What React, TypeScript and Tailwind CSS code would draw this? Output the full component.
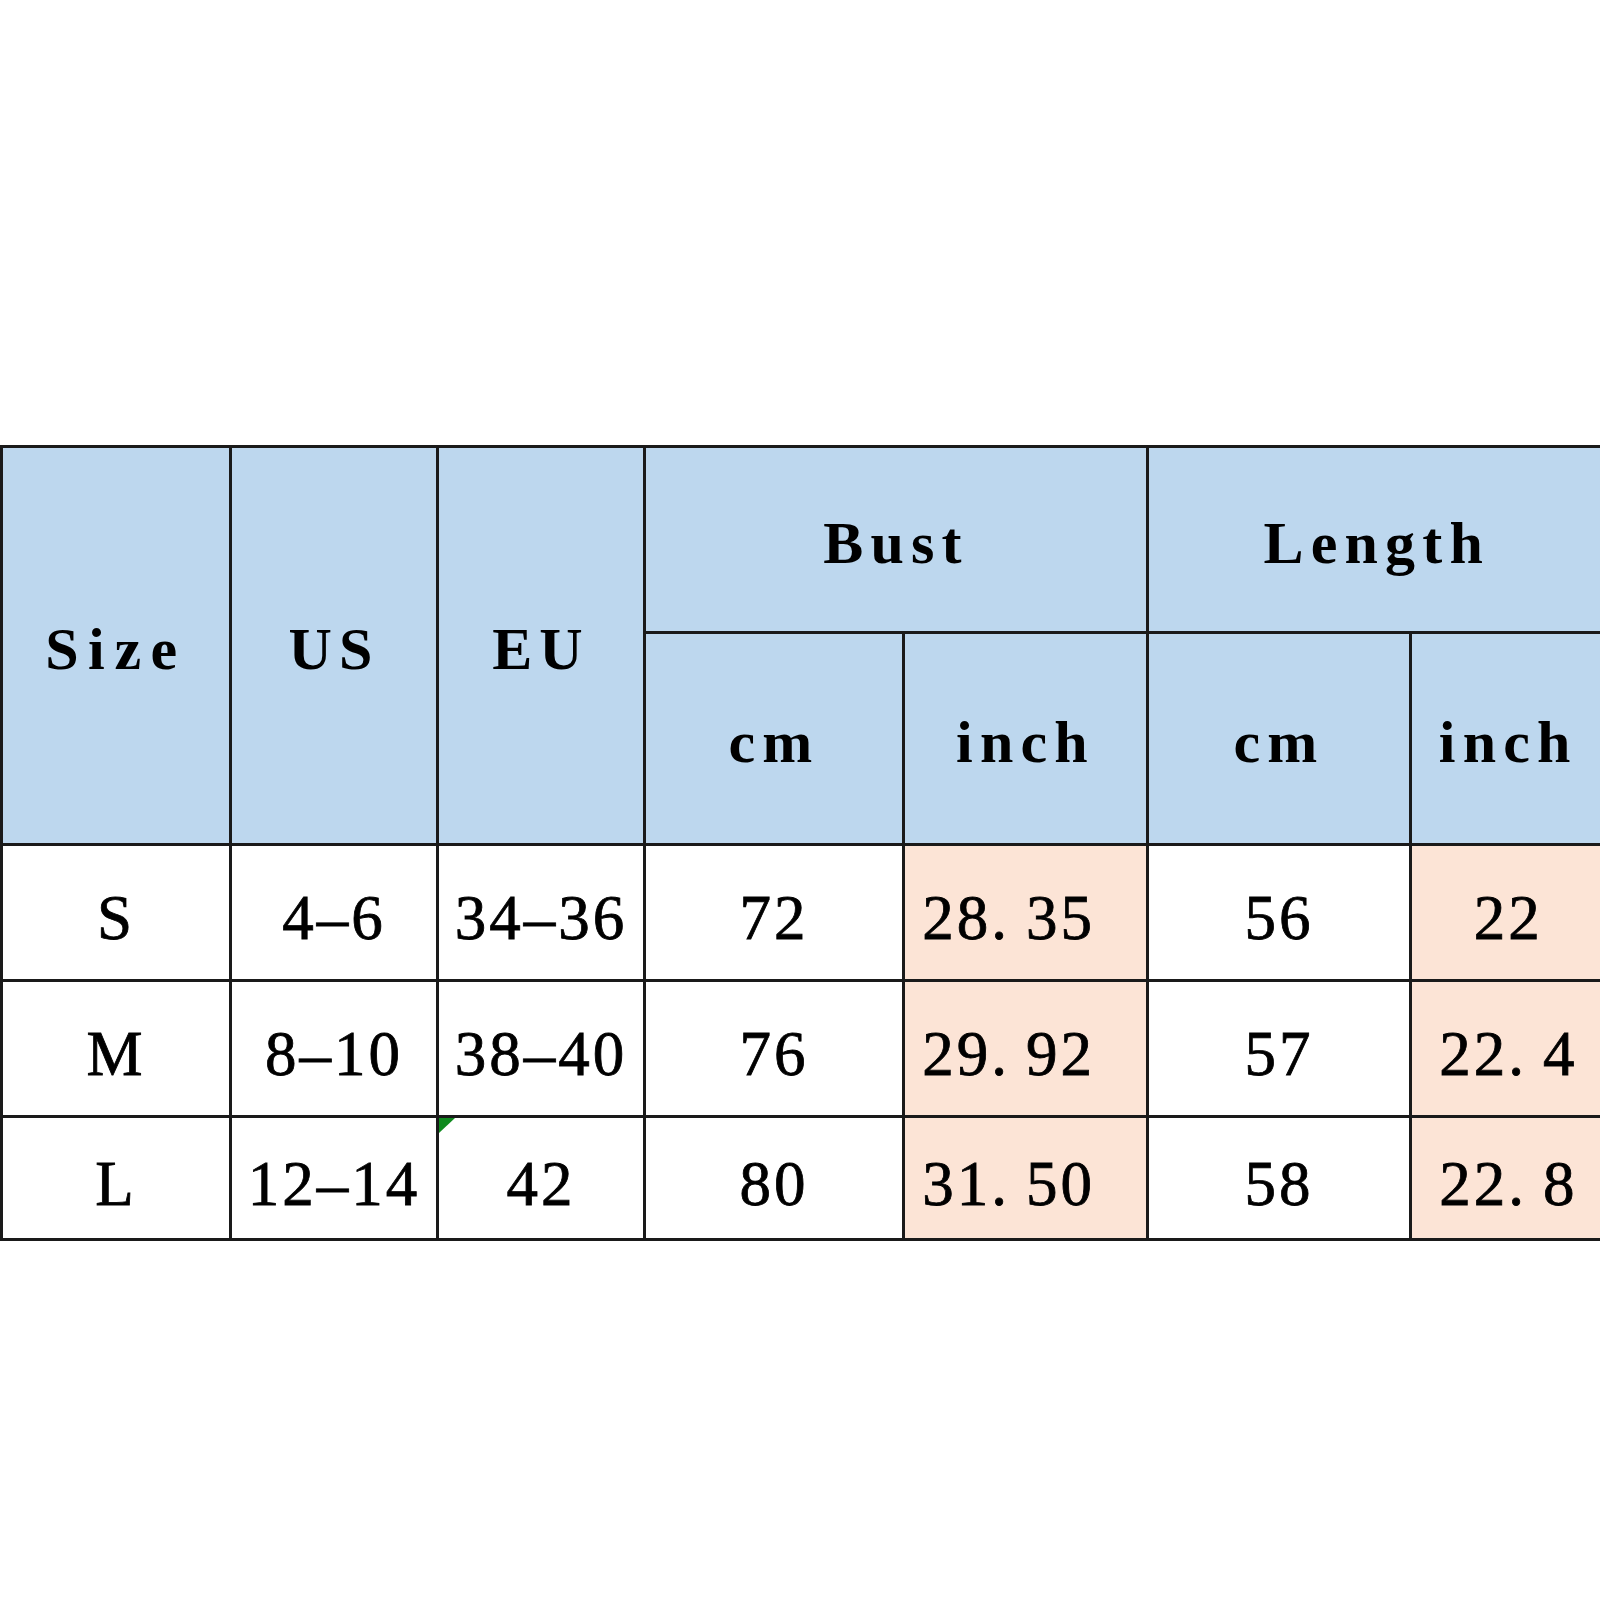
const rows = [
  { size: "S", us: "4–6", eu: "34–36", bustCm: "72", bustIn: ["28", "35"], lenCm: "56", lenIn: ["22"] },
  { size: "M", us: "8–10", eu: "38–40", bustCm: "76", bustIn: ["29", "92"], lenCm: "57", lenIn: ["22", "4"] },
  { size: "L", us: "12–14", eu: "42", bustCm: "80", bustIn: ["31", "50"], lenCm: "58", lenIn: ["22", "8"] },
];

const cell = "border-[3px] border-[#1a1a1a] text-center align-middle p-0";
const head = `${cell} bg-[#bdd7ee] pt-[6px] font-bold text-[60px] tracking-[0.12em]`;
const data = `${cell} pt-[12px] text-[63px] tracking-[3px] [-webkit-text-stroke:0.8px_black]`;

function Decimal({ parts }: { parts: string[] }) {
  if (parts.length === 1) return <>{parts[0]}</>;
  return (
    <>
      {parts[0]}
      <span className="mr-[16px]">.</span>
      {parts[1]}
    </>
  );
}

export default function App() {
  return (
    <div
      className="h-[1600px] w-[1600px] overflow-hidden bg-white pt-[445px] text-black"
      style={{ fontFamily: '"Liberation Serif", "Times New Roman", serif' }}
    >
      <table className="w-[1603px] table-fixed border-collapse">
        <colgroup>
          <col className="w-[229px]" />
          <col className="w-[207px]" />
          <col className="w-[207px]" />
          <col className="w-[259px]" />
          <col className="w-[244px]" />
          <col className="w-[263px]" />
          <col className="w-[194px]" />
        </colgroup>
        <thead>
          <tr className="h-[186px]">
            <th rowSpan={2} className={`${head} tracking-[0.16em]`}>Size</th>
            <th rowSpan={2} className={`${head} tracking-[0.06em]`}>US</th>
            <th rowSpan={2} className={`${head} tracking-[0.06em]`}>EU</th>
            <th colSpan={2} className={head}>Bust</th>
            <th colSpan={2} className={`${head} border-r-0`}>Length</th>
          </tr>
          <tr className="h-[212px]">
            <th className={head}>cm</th>
            <th className={head}>inch</th>
            <th className={head}>cm</th>
            <th className={`${head} border-r-0`}>inch</th>
          </tr>
        </thead>
        <tbody>
          {rows.map((r, i) => (
            <tr key={r.size} className={i === 2 ? "h-[123px]" : "h-[136px]"}>
              <td className={data}>{r.size}</td>
              <td className={data}>{r.us}</td>
              <td className={`${data} relative`}>
                {i === 2 && (
                  <svg className="absolute left-0 top-0" width="16" height="16" viewBox="0 0 16 16">
                    <polygon points="0,0 16,0 0,15" fill="#0f8a1e" />
                  </svg>
                )}
                {r.eu}
              </td>
              <td className={data}>{r.bustCm}</td>
              <td className={`${data} bg-[#fce4d6] pr-[34px]`}>
                <Decimal parts={r.bustIn} />
              </td>
              <td className={data}>{r.lenCm}</td>
              <td className={`${data} bg-[#fce4d6] border-r-0`}>
                <Decimal parts={r.lenIn} />
              </td>
            </tr>
          ))}
        </tbody>
      </table>
    </div>
  );
}
